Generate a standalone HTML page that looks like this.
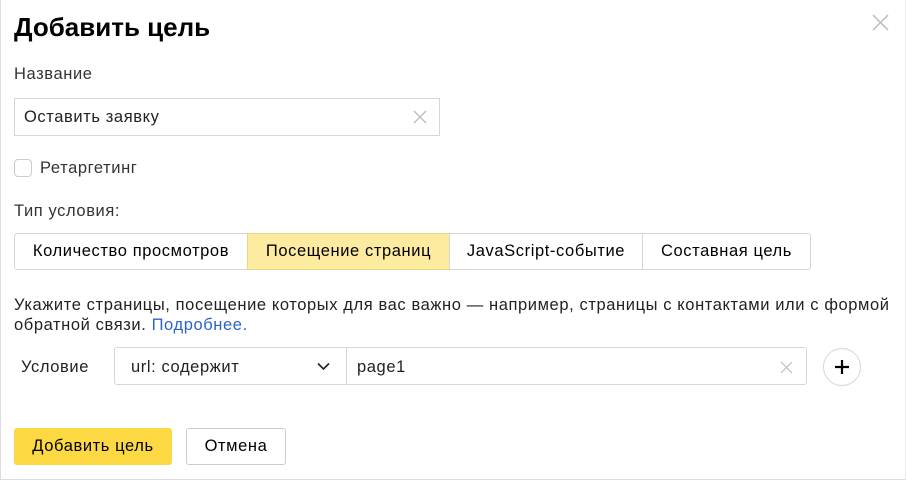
<!DOCTYPE html>
<html><head><meta charset="utf-8"><style>
body{margin:0;width:907px;height:481px;background:#fff;font-family:"Liberation Sans",sans-serif;color:#000;position:relative;overflow:hidden}
.a{position:absolute;white-space:nowrap}
.frame{position:absolute;left:0;top:-2px;width:904px;height:481px;border-left:1px solid #ddd;border-bottom:1px solid #ddd;border-right:1px solid #eee}
.box{position:absolute;border:1px solid #d6d6d6;box-sizing:border-box;border-radius:3px}
.t{font-size:16.5px;letter-spacing:0.6px}
.tab{position:absolute;top:233px;height:37px;box-sizing:border-box;border:1px solid #d6d6d6;font-size:16.5px;letter-spacing:0.6px;line-height:35px;text-align:center}
</style></head><body>
<div class="frame"></div>
<div class="a" style="left:14px;top:12px;font-size:26px;font-weight:bold">Добавить цель</div>
<svg class="a" style="left:872px;top:14px" width="17" height="17"><path d="M1 1L16 16M16 1L1 16" stroke="#bbb" stroke-width="1.5"/></svg>
<div class="a t" style="left:14px;top:65px;color:#333">Название</div>
<div class="box" style="left:14px;top:98px;width:426px;height:38px;border-radius:0"></div>
<div class="a t" style="left:24px;top:108px;color:#222">Оставить заявку</div>
<svg class="a" style="left:413px;top:110px" width="14" height="14"><path d="M1 1L13 13M13 1L1 13" stroke="#bbb" stroke-width="1.3"/></svg>
<div class="box" style="left:14px;top:159px;width:18px;height:18px;border-radius:4px;border-color:#ccc"></div>
<div class="a t" style="left:40px;top:159px;color:#333">Ретаргетинг</div>
<div class="a t" style="left:14px;top:202px;color:#333">Тип условия:</div>
<div class="tab" style="left:14px;width:234px;border-radius:3px 0 0 3px">Количество просмотров</div>
<div class="tab" style="left:247px;width:203px;background:#fdeba0;border-color:#e8d68a">Посещение страниц</div>
<div class="tab" style="left:449px;width:194px">JavaScript-событие</div>
<div class="tab" style="left:642px;width:169px;border-radius:0 3px 3px 0">Составная цель</div>
<div class="a t" style="left:14px;top:295px;color:#222;line-height:20px">Укажите страницы, посещение которых для вас важно — например, страницы с контактами или с формой<br>обратной связи. <span style="color:#2a64c8">Подробнее.</span></div>
<div class="a t" style="left:21px;top:358px;color:#222">Условие</div>
<div class="box" style="left:114px;top:347px;width:233px;height:38px;border-radius:3px 0 0 3px"></div>
<div class="a t" style="left:131px;top:358px;color:#222">url: содержит</div>
<svg class="a" style="left:317px;top:362px" width="13" height="9"><path d="M1 1.5L6.5 7L12 1.5" fill="none" stroke="#222" stroke-width="1.6"/></svg>
<div class="box" style="left:346px;top:347px;width:461px;height:38px;border-radius:0 3px 3px 0"></div>
<div class="a t" style="left:357px;top:358px;color:#222">page1</div>
<svg class="a" style="left:780px;top:361px" width="13" height="13"><path d="M1 1L12 12M12 1L1 12" stroke="#bbb" stroke-width="1.2"/></svg>
<div class="box" style="left:823px;top:348px;width:38px;height:38px;border-radius:50%"></div>
<svg class="a" style="left:834px;top:359px" width="16" height="16"><path d="M8 1V15M1 8H15" stroke="#000" stroke-width="2.2"/></svg>
<div class="a" style="left:14px;top:428px;width:158px;height:37px;background:#fcd843;border-radius:3px;font-size:16.5px;letter-spacing:0.6px;line-height:37px;text-align:center">Добавить цель</div>
<div class="box" style="left:186px;top:428px;width:100px;height:37px;font-size:16.5px;letter-spacing:0.6px;line-height:35px;text-align:center;border-color:#ccc">Отмена</div>
</body></html>
